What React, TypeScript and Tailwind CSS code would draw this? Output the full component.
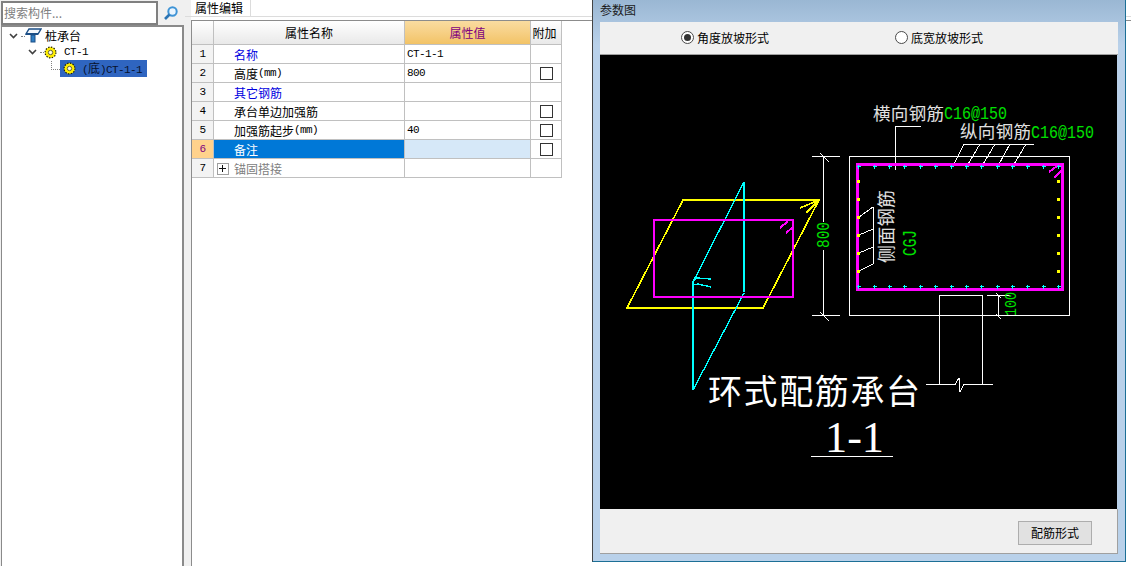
import React from 'react';

const CJK = "font-['Noto_Sans_CJK_SC',sans-serif]";
const MONO = "font-['Liberation_Mono','Noto_Sans_CJK_SC',monospace]";
const SMALL = `${MONO} text-[11px] tracking-[-0.6px]`;

// Small latin runs inside the 12px CJK labels
const Latin = ({ children }: { children: React.ReactNode }) => (
  <span className={SMALL}>{children}</span>
);

const rows = [
  { no: 1, name: <>名称</>, tone: 'text-[#0000e0]', value: 'CT-1-1', check: false },
  { no: 2, name: <>高度<Latin>(mm)</Latin></>, tone: 'text-black', value: '800', check: true },
  { no: 3, name: <>其它钢筋</>, tone: 'text-[#0000e0]', value: '', check: false },
  { no: 4, name: <>承台单边加强筋</>, tone: 'text-black', value: '', check: true },
  { no: 5, name: <>加强筋起步<Latin>(mm)</Latin></>, tone: 'text-black', value: '40', check: true },
  { no: 6, name: <>备注</>, tone: 'text-white', value: '', check: true },
  { no: 7, name: <>锚固搭接</>, tone: 'text-[#808080]', value: '', check: false },
];

const Gear = () => (
  <svg width="13" height="13" viewBox="0 0 13 13" className="shrink-0">
    <circle cx="6.5" cy="6.5" r="5.4" fill="#ffee00" stroke="#222200" strokeWidth="1.2" strokeDasharray="1.4 1.4" />
    <circle cx="6.5" cy="6.5" r="3.8" fill="#ffee00" />
    <circle cx="6.5" cy="6.5" r="2.2" fill="#fffbe0" stroke="#555533" strokeWidth="0.9" />
  </svg>
);

const Chevron = () => (
  <svg width="9" height="6" viewBox="0 0 9 6" className="shrink-0">
    <path d="M1 1 L4.5 4.5 L8 1" fill="none" stroke="#404040" strokeWidth="1.6" />
  </svg>
);

const PileIcon = () => (
  <svg width="17" height="16" viewBox="0 0 17 16" className="shrink-0">
    <path d="M4 1 H16 L13 6 H1 Z" fill="#f4f8fc" stroke="#1c4f86" strokeWidth="1.4" />
    <rect x="1" y="5" width="12" height="2" fill="#1c4f86" />
    <rect x="6" y="7" width="4" height="7" fill="#2f7fc4" stroke="#1c4f86" strokeWidth="1" />
  </svg>
);

const Tree = () => (
  <div className={`flex-1 border-l border-r-2 border-t-2 border-[#8a8a8a] bg-white ${CJK} text-[12px] text-black`}>
    <div className="mt-[1px] flex h-[16px] items-center pl-[7px]">
      <Chevron />
      <span className="ml-[3px] w-[4px] border-t border-dotted border-[#808080]" />
      <PileIcon />
      <span className="ml-[3px]">桩承台</span>
    </div>
    <div className="flex h-[16px] items-center pl-[26px]">
      <Chevron />
      <span className="ml-[3px] w-[4px] border-t border-dotted border-[#808080]" />
      <Gear />
      <span className={`ml-[7px] ${SMALL}`}>CT-1</span>
    </div>
    <div className="flex h-[17px] items-center pl-[49px]">
      <span className="mb-[8px] h-[9px] w-[9px] translate-y-[1px] border-b border-l border-dotted border-[#808080]" />
      <div className="flex h-[17px] w-[87px] items-center bg-[#2f65c0] pl-[3px]">
        <Gear />
        <span className="ml-[6px] whitespace-nowrap text-[#08122e]">
          <Latin>(</Latin>底<Latin>)CT-1-1</Latin>
        </span>
      </div>
    </div>
  </div>
);

const Table = () => (
  <div className={`grid w-[370px] grid-cols-[22px_191px_126px_31px] grid-rows-[24px_repeat(7,19px)] ${CJK} text-[12px] text-black`}>
    <div className="border-b border-r border-[#c0c0c0] bg-gradient-to-b from-white to-[#e9e9e9]" />
    <div className="flex items-center justify-center border-b border-r border-[#c0c0c0] bg-gradient-to-b from-white to-[#e9e9e9]">属性名称</div>
    <div className="flex items-center justify-center border-b border-r border-[#c0c0c0] bg-gradient-to-b from-[#fadca0] to-[#f2c366] text-[#800080]">属性值</div>
    <div className="flex items-center justify-center border-b border-r border-[#c0c0c0] bg-gradient-to-b from-white to-[#e9e9e9] pr-[3px]">附加</div>
    {rows.map(r => (
      <React.Fragment key={r.no}>
        <div
          className={`flex items-center justify-center border-b border-r border-[#c0c0c0] ${SMALL} ${
            r.no === 6 ? 'bg-[#ffd28c] text-[#800080]' : 'bg-[#f3f3f3]'
          }`}
        >
          {r.no}
        </div>
        <div
          className={`flex items-center border-b border-r border-[#c0c0c0] pt-[1px] ${r.tone} ${
            r.no === 6 ? 'bg-[#0078d7]' : 'bg-white'
          } ${r.no === 7 ? 'pl-[3px]' : 'pl-[20px]'}`}
        >
          {r.no === 7 && (
            <span className="mr-[5px] flex h-[12px] w-[12px] items-center justify-center border border-[#a0a0a0]">
              <svg width="8" height="8" viewBox="0 0 8 8">
                <path d="M0 3.5 H7 M3.5 0 V7" stroke="#111" strokeWidth="1" />
              </svg>
            </span>
          )}
          {r.name}
        </div>
        <div
          className={`flex items-center border-b border-r border-[#c0c0c0] pl-[2px] ${SMALL} ${
            r.no === 6 ? 'bg-[#d6e8f8]' : 'bg-white'
          }`}
        >
          {r.value}
        </div>
        <div className="flex items-center justify-center border-b border-r border-[#c0c0c0] bg-white">
          {r.check && <span className="h-[13px] w-[13px] border border-[#333333] bg-white" />}
        </div>
      </React.Fragment>
    ))}
  </div>
);

// Rebar ticks along the stirrup
const rebarX = [858, 874, 889, 904, 920, 935, 951, 966, 981, 997, 1012, 1027, 1043, 1058];
const rebarY = [181, 199, 217, 235, 253, 271];

const Tick = ({ x, y, color }: { x: number; y: number; color: string }) => (
  <path d={`M${x - 1.5} ${y + 0.5} H${x + 2.5} M${x + 0.5} ${y - 1.5} V${y + 2.5}`} stroke={color} strokeWidth="1" />
);

const Drawing = () => (
  <svg width="517" height="454" viewBox="600 55 517 454" className="block bg-black" shapeRendering="crispEdges">
    {/* isometric sketch on the left */}
    <path d="M683 200 H819 L763 308 H627 Z M800 208 L819 200 L806 213" fill="none" stroke="#ffff00" strokeWidth="1.6" />
    <path d="M744 182 V292 M744 182 L693 282 V390 L744 293 M693 282 L697 278 L711 279 M693 285 L698 284 L711 287" fill="none" stroke="#00ffff" strokeWidth="1.4" />
    <rect x="654" y="220" width="139" height="77" fill="none" stroke="#ff00ff" strokeWidth="2" />
    <path d="M780 228 L788 221 M786 233 L793 227" stroke="#ff00ff" strokeWidth="2" />

    {/* section outline and dimensions */}
    <g fill="none" stroke="#ffffff" strokeWidth="1">
      <rect x="849.5" y="156.5" width="220" height="159" />
      <path d="M823.5 156 V222 M823.5 250 V316 M812 156.5 H840 M820 153 L829 162 M812 315.5 H840 M820 312 L829 321" />
      <path d="M895.5 126.5 H921 M895.5 126 V170" />
      <path d="M964 144.5 H1034 M964 144 L953 166 M980 144 L967 166 M995 144 L982 166 M1010 144 L998 166 M1026 144 L1013 166" />
      <path d="M873.5 207 V264 M873 207 L859 217 M873 229 L859 235 M873 247 L859 253 M873 264 L859 271" />
      <path d="M939.5 384 V295.5 H982.5 V384 M926 384.5 H955 L959 378 L960 392 L964 384.5 H993" />
      <path d="M987 295.5 H1010 M998.5 295 V316 M996 293 L1001 298 M996 314 L1001 319" />
      <path d="M811 456.5 H893" />
    </g>
    <rect x="857.5" y="164.5" width="205" height="125" fill="none" stroke="#ff00ff" strokeWidth="2.4" />
    <path d="M1049 172 L1060 164 M1054 178 L1062 170" stroke="#ff00ff" strokeWidth="2" />
    {rebarX.map(x => (
      <React.Fragment key={x}>
        <Tick x={x} y={166} color="#00ffff" />
        <Tick x={x} y={286} color="#00ffff" />
      </React.Fragment>
    ))}
    {rebarY.map(y => (
      <React.Fragment key={y}>
        <rect x={857} y={y - 1} width="3" height="3" fill="#ffff00" />
        <rect x={1057} y={y - 1} width="3" height="3" fill="#ffff00" />
      </React.Fragment>
    ))}

    {/* annotations */}
    <g className={CJK} shapeRendering="auto">
      <text x="873" y="120" fontSize="17.5" fill="#e0e0e0" textLength="71">横向钢筋</text>
      <text x="960" y="138" fontSize="17.5" fill="#e0e0e0" textLength="71">纵向钢筋</text>
      <text transform="translate(893 263) rotate(-90)" fontSize="18" fill="#e0e0e0" textLength="73">侧面钢筋</text>
      <text x="708" y="404" fontSize="34" fill="#ffffff" textLength="212">环式配筋承台</text>
    </g>
    <g className={MONO} shapeRendering="auto" fill="#00e000">
      <text x="944" y="119" fontSize="18" textLength="63" lengthAdjust="spacingAndGlyphs">C16@150</text>
      <text x="1031" y="138" fontSize="18" textLength="63" lengthAdjust="spacingAndGlyphs">C16@150</text>
      <text transform="translate(829 248) rotate(-90)" fontSize="18" textLength="26" lengthAdjust="spacingAndGlyphs">800</text>
      <text transform="translate(1016 316) rotate(-90)" fontSize="17" textLength="24" lengthAdjust="spacingAndGlyphs">100</text>
      <text transform="translate(916 256) rotate(-90)" fontSize="20" textLength="26" lengthAdjust="spacingAndGlyphs">CGJ</text>
    </g>
    <text x="825" y="452" fontSize="44" fill="#ffffff" textLength="59" lengthAdjust="spacingAndGlyphs" shapeRendering="auto" className="font-['Liberation_Serif',serif]">1-1</text>
  </svg>
);

const Radio = ({ on, label }: { on: boolean; label: string }) => (
  <div className="flex items-center gap-[3px]">
    <span className="flex h-[13px] w-[13px] items-center justify-center rounded-full border border-[#4a4a4a] bg-white">
      {on && <span className="h-[7px] w-[7px] rounded-full bg-[#333333]" />}
    </span>
    <span>{label}</span>
  </div>
);

const ParamDialog = () => (
  <div className={`absolute left-[592px] top-0 flex h-[562px] w-[534px] flex-col border-b border-l border-r border-b-[#1c6f96] border-l-[#444444] border-r-[#1c6f96] bg-gradient-to-b from-[#9ab7d3] to-[#b9d1ea] to-[8%] pb-[7px] pl-[7px] pr-[7px] ${CJK} text-[12px] text-black`}>
    <div className="flex h-[22px] items-center pb-[3px] text-[#1a1a1a]">参数图</div>
    <div className="flex h-[33px] items-center gap-[126px] border-b border-[#a0a0a0] bg-[#f0f0f0] pl-[81px] pb-[1px]">
      <Radio on label="角度放坡形式" />
      <Radio on={false} label="底宽放坡形式" />
    </div>
    <Drawing />
    <div className="flex flex-1 items-start justify-end border-b border-r border-[#a0a0a0] bg-[#f0f0f0] pr-[25px] pt-[12px]">
      <button className="flex h-[24px] w-[74px] items-center justify-center border border-[#adadad] bg-[#e1e1e1]">配筋形式</button>
    </div>
  </div>
);

const App: React.FC = () => {
  return (
    <div className="relative flex h-[566px] w-[1131px] overflow-hidden bg-white">
      {/* left tree panel */}
      <div className="flex h-full w-[185px] flex-col bg-[#f0f0f0] pl-[1px] pr-[1px] pt-[1px]">
        <div className="flex h-[24px] items-center">
          <div className={`flex h-[24px] w-[157px] items-center border-2 border-[#808080] bg-white pl-[1px] ${CJK} text-[12px] text-[#808080]`}>搜索构件...</div>
          <svg width="16" height="16" viewBox="0 0 16 16" className="ml-[5px]">
            <circle cx="9.5" cy="6.5" r="4.2" fill="#eaf5ff" stroke="#3f94d6" strokeWidth="2" />
            <path d="M6.5 9.5 L2 14" stroke="#2a74b4" strokeWidth="2.6" />
          </svg>
        </div>
        <Tree />
      </div>

      {/* property editor */}
      <div className="flex h-full flex-1 flex-col bg-white">
        <div className="flex h-[17px] border-b border-[#dcdcdc] bg-white">
          <div className="w-[6px] bg-[#f0f0f0]" />
          <div className={`flex w-[60px] items-center border-r border-[#dcdcdc] pl-[4px] ${CJK} text-[12px] text-black`}>属性编辑</div>
        </div>
        <div className="flex flex-1">
          <div className="w-[6px] bg-[#f0f0f0]" />
          <div className="flex flex-1 flex-col">
            <div className="h-[3px] bg-white" />
            <div className="flex-1 border-l border-t border-[#8c8c8c]">
              <Table />
            </div>
          </div>
        </div>
      </div>

      <ParamDialog />
    </div>
  );
};

export default App;
